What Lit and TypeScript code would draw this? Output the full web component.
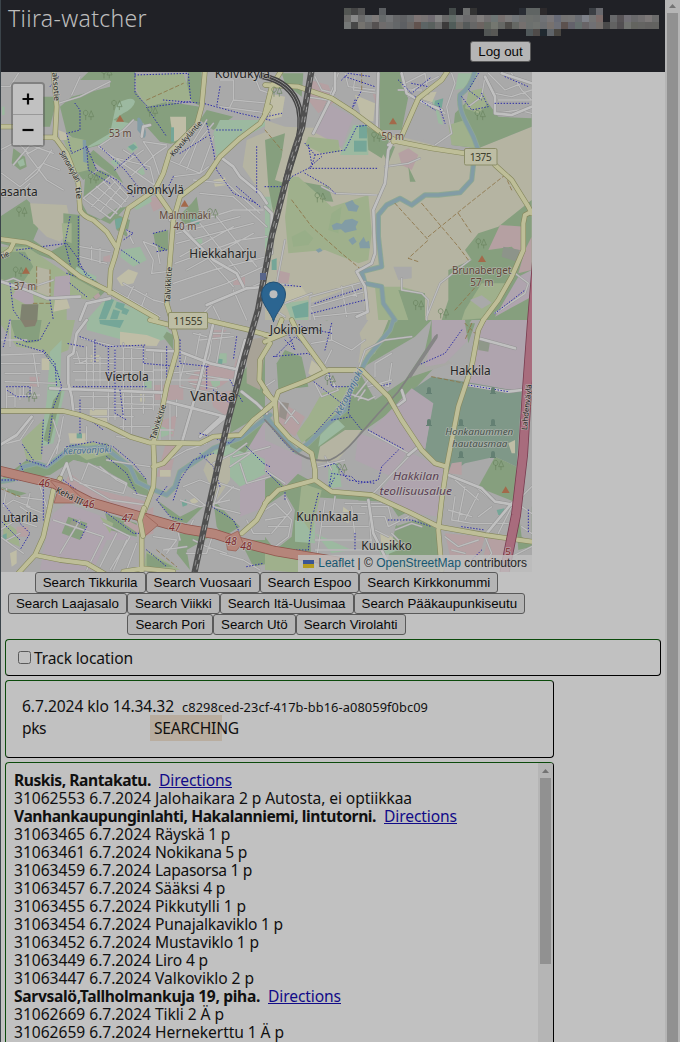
import { LitElement, html, svg, css } from "lit";
import { customElement } from "lit/decorators.js";

type Area = [string, string];
type Label = [string, number, number, number, number, string?, number?];
interface Tile {
  x: number;
  y: number;
  areas: Area[];
  water: string;
  streets: string;
  collectors: string;
  paths: string;
  tracks: string;
  major: string;
  trees: [number, number][];
  peaks: [number, number][];
  labels: Label[];
}

const F = "#869f7e", G = "#9fb08c", P = "#9cb9a0", R = "#b5b4a2", I = "#afa4ae",
  T = "#75a698", C = "#b5a0a2", S = "#bfbda6", W = "#829ca5", K = "#7f9888", B = "#a9a9a9";

const tiles: Tile[] = [
  {
    x: 0, y: 70,
    areas: [
      [F, "M265 6H405V60L440 110L500 95L515 222L480 215L430 160L400 150L300 225L262 235L290 300L250 330L225 300L215 200L200 190L180 110L215 80L330 50V30L240 30Z"],
      [P, "M345 120Q350 95 375 90Q400 80 405 95Q400 115 370 130L340 150L390 160L320 215L270 232L262 230L330 190Z"],
      [G, "M405 15L550 10L575 90L500 95L440 110L410 60Z"], [F, "M565 6H605V110L575 95L560 40Z"],
      [F, "M505 95L600 110L590 150L545 220L510 220L480 170Z"], [S, "M510 140H558V200L520 215Z"], [T, "M513 172H522V215H513Z"],
      [F, "M620 120L700 140L640 180L600 150Z"],
      [P, "M640 190L660 150L790 150L800 165L700 220L650 265Z"], [R, "M740 210L810 180V420L770 350L728 290Z"],
      [F, "M0 440L80 388L130 440L100 510L150 545L200 520L230 590L160 570L90 545L0 520Z"],
      [R, "M90 400L200 405L215 470L180 515L140 500L100 460Z"],
      [F, "M190 430L240 435L240 590L320 660L290 690L210 650L190 520Z"], [G, "M185 460L215 460L215 520L190 510Z"],
      [G, "M0 530L80 530L200 610L300 665L270 690L200 680V750H0Z"], [F, "M0 545L75 545L100 590L60 650L0 625Z"],
      [R, "M110 590L150 600L150 680L110 665Z"], [I, "M60 640H95L102 700L80 705L35 680Z"], [I, "M165 620L210 615V680L160 690Z"],
      ["#7f8270", "M65 703H115L112 750H60Z"], [F, "M130 80H165V110L150 170H130Z"], [P, "M6 110H14V135H6Z"],
      [F, "M40 235L75 260L80 290L60 300L35 280Z"], [P, "M52 275L70 265L75 285L60 290Z"],
      [F, "M255 325L300 300L335 315L250 390Z"], [F, "M246 400L262 430L330 462L380 410L350 415L300 450L250 435Z"],
      [G, "M185 195L255 210L265 300L225 310L210 260Z"], [F, "M280 240L340 290L370 340L300 290L260 260Z"], [P, "M380 235L405 215L415 235L395 250Z"],
      [T, "M384 230L400 222L412 232L398 242Z"], [P, "M410 300L428 290L435 312L420 318Z"], [P, "M330 275L350 265L360 280L345 290Z"],
      [W, "M412 145Q420 135 430 165Q445 190 432 205L412 180Z"], [W, "M248 210H258L262 280L250 275Z"],
      [C, "M445 385L470 380L490 410L460 425Z"], [P, "M425 390L450 370L455 395L410 420L400 410Z"],
      [F, "M340 430L390 450L380 500L350 480Z"], [T, "M345 448L365 442L368 468L348 478Z"], [F, "M460 490L505 480V540L470 545Z"],
      [P, "M365 540L420 530L440 570L400 590L360 560Z"], [S, "M350 625L385 598L414 608L400 640L365 648Z"],
      [F, "M575 400L590 380L600 440L560 470L535 440Z"], [T, "M570 445L600 440V462L575 465Z"], [P, "M585 510L605 505L610 525L595 530Z"],
      [S, "M640 330L675 322L680 345L645 350Z"], [S, "M175 180L200 190V210H180Z"], [P, "M230 590L290 620L280 650L220 610Z"],
      [P, "M260 750L322 680L480 750Z"], [T, "M320 682L342 690L318 748H296Z"], [T, "M350 695L375 702L368 722L345 712Z"], [T, "M340 718L360 724L352 748H330Z"], [T, "M370 712L388 720L380 735L364 730Z"],
      [C, "M700 625L735 620V645H700Z"], [C, "M310 560L330 555V575H310Z"], [C, "M280 680L295 668L302 678L288 690Z"], [S, "M165 690L200 685L210 715L160 725Z"],
    ],
    water: "",
    streets: "M0 50H30L55 10M175 100L240 80L330 35M215 75L240 20M0 240L50 215L85 250L130 225M40 285L90 225L160 250M75 330L130 280L180 300M80 250L140 330L190 360M5 310L60 350L110 310L155 240M10 380L60 370L90 340M295 230L370 180L400 150M295 230L470 350M330 260L450 290L465 350M360 290L430 240M390 320L470 250L500 230M370 240L400 260M430 215L500 225M430 215L460 260L480 320M250 385L330 320L385 380L330 445ZM270 370L350 430M290 350L365 410M310 335L378 395M275 410L345 335M300 425L362 350M505 270L600 310L640 200M540 280L620 150M560 300L590 220L640 160M520 320L600 310L625 290M580 330L680 340L780 430M600 370L700 380L800 470M540 470L700 420L790 420M530 490L720 440M530 520L760 460M540 560L700 470M560 600L760 490M525 580L720 510L800 500M600 460L720 610M650 440L770 590M560 480L620 560L700 650M520 640L640 600L800 560M540 690L680 640L790 590M600 740L640 700L780 640M700 660L740 750M640 710L660 750M380 480L400 520M430 515L460 570L455 610L500 605M430 515L470 530L480 580M240 530L330 545M300 535V580M275 530V570M240 560L320 580M370 640L460 690L500 700M400 650L380 690M440 670L420 720M340 660L480 740M660 30H700V90L810 100M700 90L690 110M660 110L810 130M760 10L780 60L810 70M0 640L40 625L100 650L160 630",
    collectors: "M660 260L700 290L720 320L780 370L800 400M510 450L550 480L640 570L710 610L730 650M330 685L260 700L240 750M5 635L80 660L140 685L240 680M425 200L430 170L450 165M800 650L740 655L620 705",
    paths: "M175 20L150 50M405 10V70L445 112L570 95M405 15L565 10L572 90M440 112L500 200M225 100L240 120L240 180L200 190L215 250L260 230L290 300L350 330L400 380M260 230L265 300L330 340M300 230L375 300L430 370M345 300L400 250L440 300M235 440L235 590M210 440L195 520L215 600M50 540L200 520L230 560L270 640M90 570L60 550M200 610L290 640M240 590L300 650M210 640L260 680M620 160L640 240M640 240L650 300L700 370L770 400M490 90L610 100L720 130L810 150M660 50L650 110M770 230V370M460 490L500 480M460 520L500 540L470 545M380 480L400 490L370 510M350 530L420 580M30 640L40 720L60 750M150 690L160 750M540 250L620 200M520 320L500 360M710 350L780 410M650 180L730 180",
    tracks: "M440 90L550 40M110 590V660M150 600V680M100 700H150",
    major: "M160 0L170 110L165 205M0 170H40M130 202H165L200 250L235 340L240 420Q250 440 280 450L320 485L348 530M615 0L605 110L590 165L510 245L490 310L465 360L385 415L360 500L345 560L332 600L328 668M465 360L510 425M810 110L780 160L720 205L660 260L620 320L540 380L520 450L510 570L500 700L515 750M0 507L80 518L150 550L240 620L330 665L470 745M40 520L30 540L0 560",
    trees: [[265, 135], [350, 105], [457, 125], [65, 425], [320, 10], [280, 325], [55, 605], [638, 430]],
    peaks: [[360, 146], [554, 401], [78, 602]],
    labels: [["Simonkylä", 466, 370, 172, 36], ["asanta", 57, 377, 112, 36], ["Hiekkaharju", 669, 563, 202, 36], ["Koivukylä", 727, 21, 166, 36],
      ["53 m", 361, 200, 68, 30, "#62483a"], ["Malmimäki", 555, 444, 154, 30, "#62483a"], ["40 m", 555, 479, 69, 30, "#62483a"], ["37 m", 75, 657, 67, 30, "#62483a"],
      ["Koivukyläntie", 562, 210, 132, 23, "#222", -49], ["Simonkylän", 205, 292, 104, 23, "#222", 60], ["tie", 230, 370, 36, 23, "#222", 82], ["aksotie", 162, 50, 86, 23, "#222", 86], ["Talvikkitie", 511, 645, 108, 23, "#222", -87], ["tie", 17, 560, 26, 23, "#222", -25]],
  },
  {
    x: 265, y: 70,
    areas: [
      [R, "M0 150L60 170L330 180L600 250L800 170V750H0Z"], [P, "M0 380H20V500L0 540Z"], [B, "M0 60L50 50L120 10H340V160L240 250L180 180L120 160L60 140L0 150Z"],
      [F, "M50 10H115L110 80L60 40Z"], [I, "M180 95L265 140L230 230L145 185Z"], [C, "M135 30L190 45L210 95L160 130L130 90Z"],
      [S, "M270 75L330 100L325 155L290 145Z"], [P, "M265 165H310V255L225 255Z"], [T, "M282 165H306V205H282Z"], [T, "M267 212H305V245H267Z"], [G, "M130 200L220 210L225 245L170 250L120 225Z"],
      [F, "M340 6H500L430 80L410 180H345Z"], [F, "M305 170L375 205L350 265L310 240Z"], [B, "M410 6H545L460 90L450 80L410 50Z"], [P, "M480 70L510 90L540 180L490 170Z"], [T, "M510 92L535 85L530 115L505 118Z"], [S, "M470 70L515 65L500 100L475 100Z"],
      [B, "M440 110L510 110L520 160L550 170L500 225L460 200Z"],
      [F, "M570 130L640 60L700 130L800 130V170L640 235L560 225Z"], [G, "M550 165L600 150L640 235L560 225Z"], [P, "M580 10H640L620 50L570 60Z"], [B, "M640 6H800V145L700 140L640 60Z"],
      [G, "M610 65L650 55L670 100L640 130L600 115Z"],
      [F, "M0 210L60 190L50 260L30 330L60 340L25 430L10 350Z"], [F, "M110 335L190 350L205 395L130 390L100 360Z"],
      [G, "M75 320L100 320L200 410L310 375L320 490L310 570L280 580L180 540L70 550L60 440Z"], ["#98ae88", "M80 500L120 480L145 505L130 525L85 530Z"], ["#98ae88", "M200 430L230 410L220 490L190 480Z"],
      [W, "M240 400L262 390L270 402L282 408L275 425L250 422Z"], [W, "M200 466L215 458L230 462L240 450L262 446L280 455L272 470L275 480L240 488L228 478L205 480Z"], [W, "M250 510L266 500L275 515L262 525ZM282 520L296 500L303 516L312 512L315 535L285 535Z"], [W, "M152 540L165 534L173 542L160 548Z"],
      [F, "M800 390L700 470L640 490L600 540L620 570L550 600L550 690L530 750H800Z"], [C, "M705 465L780 470L775 565L740 530L670 540Z"], ["#8d948a", "M715 530L765 540L755 575L710 560Z"], [I, "M760 620L800 600V680L690 740Z"], [C, "M780 540L800 500V600L760 610Z"],
      [G, "M600 720L650 640L730 640L655 745L590 750Z"], [B, "M615 690L650 676L680 698L650 716Z"],
      [C, "M400 250L430 235L460 255L440 300L410 285Z"], [F, "M430 290L452 335L435 335Z"], [F, "M330 210L390 230L370 280Z"], [B, "M385 590L440 590V625L400 630Z"],
      [G, "M330 650L410 650L480 670V750H340Z"], [F, "M400 660L480 670L480 750H430Z"], [P, "M60 700L130 690V750H80Z"], [T, "M80 710L130 695V740L90 745Z"], [B, "M135 700L290 640L305 750H135Z"], [S, "M45 655L110 650L130 680L60 700Z"], [T, "M20 570L35 565V600H20Z"], [C, "M35 600L75 610L70 640L40 640Z"],
      [S, "M10 70L60 80L50 140L10 150Z"], [C, "M320 60L338 80V120Z"],
    ],
    water: "M630 0Q620 50 585 75Q580 110 600 150L625 200L640 240M625 285L620 330L585 368L520 375L480 375L440 405L405 385L365 405L340 435V500L350 590L290 605L300 640L350 650L355 700L390 750",
    streets: "M120 80L190 90L145 190M220 10L190 90M150 20L170 60L210 70M240 10L250 50L330 60M270 20L265 60L340 70M410 10L430 80L500 100M420 40L480 10L490 70M440 60L520 20M490 100L540 130M400 60L470 60M560 10L570 40L545 110L560 190L510 225M610 110L650 80L660 20M660 20L690 70L740 80L800 60M670 10L720 60L770 40M690 130L760 120L800 130M700 90L800 90M740 10L770 60L800 90M170 350L210 370L335 375M360 290L430 280L465 265M35 640L60 510M60 700L140 670M135 750V680L300 635M140 710L300 665M230 650L245 740M260 645L275 680M410 625V660L470 670L490 690L485 750M485 740L525 640L615 570M140 720L150 750M150 740L300 725M690 730L780 670L790 640L750 610M20 640L80 645M0 700L60 740",
    collectors: "M340 10L335 170M370 225L385 215M385 215L370 240L360 340L325 420L330 550L320 580L275 605L300 650L308 725L275 740M410 10L425 70L470 95L530 120M660 20L690 80L690 130L740 135L800 110M710 10L800 40M210 10V60L145 190M0 410L20 430L20 550",
    paths: "M135 295L340 295M120 220L150 255L240 240L275 170L310 165M150 255L140 290L80 320M120 310L190 350L210 370M240 20L330 50M270 90L260 120L290 60M400 30L440 70L500 20M440 40L490 50M590 80L620 120L670 110L650 70M640 10L610 60L650 90M720 20L790 50M690 100L790 100M135 290L170 260M140 730L300 690M150 700L290 655M5 140L50 130M0 350H60L80 320M520 100L540 160M130 225L140 280M690 730L780 660M230 30L250 10L320 20M450 80L510 120M60 645L110 650",
    tracks: "M390 400L490 510L430 565M490 500L600 410L720 315M470 400L580 530L610 570M580 430L620 490M430 565L460 575M720 315L740 360M570 720L650 630M80 390L140 470L230 550L290 600M0 180L50 240M290 10V60",
    major: "M0 45L100 50L200 85L270 130L350 190L400 215L500 235L600 250M690 285L740 330L790 410L800 430M800 425L780 435L775 460V540L740 620L700 690L655 750M550 0L530 30L460 85L440 130L405 210L385 215M50 0L20 50L0 130",
    trees: [[335, 200], [165, 382], [645, 135], [648, 520], [460, 705], [35, 65], [535, 730]],
    peaks: [[384, 154], [651, 567]],
    labels: [["50 m", 383, 207, 67, 30, "#62483a"], ["Brunaberget", 650, 610, 178, 30, "#62483a"], ["57 m", 651, 645, 70, 30, "#62483a"]],
  },
  {
    x: 0, y: 320,
    areas: [
      [G, "M0 0H225L205 90L180 100L170 130L150 140L130 90L50 80L0 10Z"], [F, "M30 0H125L115 65L80 70L45 50Z"], ["#85806f", "M62 0H112L105 18L75 22Z"],
      [P, "M150 95L185 60L180 200L195 210L160 370L120 380L140 240Z"], [F, "M160 240L185 210L180 240L150 370L130 360Z"], [P, "M260 0H480L520 50L470 65L370 60L260 30Z"], [T, "M298 0H372L360 24L300 12Z"], [S, "M360 35L440 45L480 60L470 78L360 75Z"],
      [G, "M65 360L130 300L125 420L80 420Z"], [F, "M0 480L80 420L150 440L200 380L320 370L440 480L450 540L400 510L300 440L220 420L150 465L60 480Z"],
      [G, "M200 380L280 365L340 400L260 420Z"], [C, "M210 455L280 500L440 545L430 600L250 545L190 500Z"], [B, "M220 420L300 440L380 490L375 530L260 500L200 450Z"], [S, "M270 265H322V310L268 300Z"], [S, "M272 105H300V125H272Z"], [S, "M125 115H148V150H125Z"], [S, "M205 340H260V370H210Z"], [T, "M230 340H246V355H230Z"],
      [C, "M460 195H550V240H465Z"], [C, "M560 180L610 130L700 150L710 110L720 160L660 200L600 220Z"], [C, "M630 30H680L650 60H630Z"], [C, "M630 220L710 210L760 240L680 290L640 260Z"], [C, "M490 300L530 285L520 350L480 340Z"],
      [C, "M88 170H118V200H90Z"], [P, "M430 185L455 180V205H430Z"], [S, "M420 222H435V245H420Z"], [P, "M655 100H680V130H650Z"], [T, "M655 116L668 118L666 136L653 132Z"], [P, "M630 180L660 170V195L640 205Z"],
      [F, "M690 340L700 200L760 110L770 60L810 60V270L740 310Z"], ["#a8a397", "M740 60L800 50L780 210L740 190Z"],
      [P, "M600 400L700 360L810 430V470L720 500L640 420Z"], [R, "M630 400L690 410L690 480L650 540L610 450Z"], [I, "M740 330L810 290V420L780 410L730 360Z"], [I, "M720 500L800 460V560L720 590Z"], [F, "M690 350L790 310L735 400L690 380Z"],
      [P, "M455 320H490L520 340L460 360Z"], [C, "M500 360L530 380L510 470H470Z"], [S, "M480 450H512V470H480Z"],
      [F, "M470 540L540 590L620 550L560 610L520 600Z"], [F, "M640 540L720 620L670 650L650 620Z"], [F, "M540 640L630 650L560 690L570 750L530 700Z"],
      [I, "M160 580L200 550L310 590L410 660L320 660L280 750H120L140 640Z"], [F, "M315 580L410 610L410 650L330 630Z"], [F, "M205 590L262 610L240 660L185 640Z"], ["#979c8a", "M215 600L245 610L235 630L205 622Z"], [G, "M300 590L340 610L330 640Z"],
      [C, "M420 585L460 560L460 640L420 650Z"], [F, "M0 500L80 520L50 530Z"], [G, "M10 600L50 630L60 680L10 660Z"], [T, "M8 645L20 640V658H8Z"], [S, "M570 540L590 530L595 545L575 555Z"], [T, "M545 545L558 538L562 555L548 560Z"], [C, "M50 620H85V650H50Z"],
      [G, "M440 690L540 750H430Z"], [F, "M440 700L520 740L440 745Z"], [F, "M720 660H810V730L760 740Z"], [S, "M30 700L50 690V730L35 740Z"], [C, "M380 600L460 640L430 650L370 610Z"], [F, "M500 35L520 45L520 90L490 50Z"],
    ],
    water: "M0 485L40 478L70 440L110 430L140 440L180 410L215 380L260 385L310 380L350 410L390 440L410 485L450 505L500 525L525 500L540 455L570 435L600 415L640 385L720 355L810 285",
    streets: "M0 105L130 100M0 130H120M15 160H120M15 185L170 190M20 205V265M60 205V240M100 100L115 200M30 0V80M0 60H80M25 230L120 225M45 200V260M70 200V230M95 200V225M245 55L350 80L540 95M230 95L240 130L260 120M225 130H340M220 155H460M225 180H700M260 80V200M280 60V270M300 110V210M325 75V300M345 80V300M370 70V340M395 80V340M430 80V280M460 90V270M485 90V260M220 115H440M240 230H460M225 265H455M240 290H400M340 250L490 255M360 320H450M350 350L450 360M540 90V200L640 220M560 100L540 180M600 40L585 120M640 0L630 100L540 370M670 20L650 130M690 40H630M580 110L700 150M600 60L700 50M560 160L690 180M570 190L650 205M600 180L575 260M580 40L620 50M460 330H520M480 260V360M510 250V360M530 240V290M500 160L610 150M460 150H500M260 320V360M160 300L180 360L140 440M190 290L170 400M100 300L60 360L0 375M0 300V260M245 480L265 430L380 490L370 520M300 440L350 480L380 495M210 470L330 540L440 555M240 490L370 520M320 420L380 430L450 440M400 520L440 530M20 505L10 560L40 540L90 560M50 530L130 540M90 520L80 560L130 580M60 560L120 600M470 440L560 390L620 370M550 500L600 480L650 500M540 540L600 560L690 540M560 510L620 560M580 600L560 640L620 640M640 430L700 400L740 370M700 500L650 550M720 430L740 490L810 470M700 410L810 380M690 440L750 400M720 510L660 490L640 560L720 580M160 600L310 650L260 750M310 610L390 650L330 750M350 640L300 740M380 660L340 750M410 670L380 750M240 600L180 700M140 560L120 500M0 630L50 600L110 620M0 650L70 700M20 660L60 640M580 660L620 680L680 700M640 640L620 700M660 700L730 720L780 750M490 690L560 680M470 600L530 620L540 660M460 650L530 660L500 700M560 700H620M740 600L760 640L810 640",
    collectors: "M260 0L230 40L220 100L205 110L205 190L215 230L220 275M150 205L340 212L490 218M500 245L580 265L675 290M440 90L540 95L630 130L720 150M735 60L710 150L690 280L620 340M640 10L600 180L545 370M665 290L600 350M0 375L50 345L95 290M180 475L200 430L215 480M725 215L770 250L800 280",
    paths: "M45 50L80 65L120 60L150 5M50 70L130 95L170 150L185 200L160 260L145 370M130 90L165 130L170 200M30 0L10 80M240 50L320 80L440 75M285 60V130M250 80L200 70M345 90V280L380 300M360 210L370 290M325 85V180M430 80V130L540 140M500 80V200M540 60V130L630 140M220 200H440M240 240V340M270 300L310 330M200 380L280 365L340 380L400 430L440 480M100 420L65 370M80 420L140 440L190 400M60 430L80 480L0 480M130 300L125 400M320 410L380 460L410 520M520 540L540 480L580 420L640 400M620 140V210M600 340L690 370L740 320L810 270M600 400L640 440L660 500M640 210L690 250M500 500L470 540M20 200H90V230H50L20 210M470 540L510 590L550 600M190 480L270 540L400 640L440 640M130 500V600M10 550L50 600L90 640L60 690M620 550L700 600L720 640M440 690L500 740M0 600L60 660M740 380L790 430L810 440M690 180L730 250M500 10L540 60M220 600L260 620L240 660M740 740L790 730M710 50L700 120",
    tracks: "M0 505L60 530M470 690L530 740",
    major: "M0 273H190L240 285L320 315L390 350L450 368L600 370L640 350L720 345L760 300L810 260M515 0L530 60L530 95L500 200L480 300L460 368L463 440L460 500L430 580L425 640L425 765M460 440L490 430L540 375L545 370M450 0L530 20L620 0L740 28L810 48M810 70L780 120L778 180L810 230M805 535L770 600L725 640M180 475L160 510L150 560L130 650L105 705L50 765M105 705L180 720L260 730L320 765M370 755L430 745L520 755",
    trees: [[95, 230]],
    peaks: [],
    labels: [["Viertola", 381, 182, 130, 36], ["Vantaa", 639, 242, 136, 42], ["utarila", 62, 605, 106, 36], ["Keravanjoki", 262, 398, 146, 27, "#486f96", -3], ["Talvikkitie", 480, 307, 108, 23, "#222", -72], ["Kehä III", 205, 534, 86, 25, "#222", 27],
      ["46", 133, 499, 34, 30, "#812b2e"], ["46", 266, 562, 34, 30, "#812b2e"], ["47", 382, 605, 34, 30, "#812b2e"], ["47", 524, 632, 34, 30, "#812b2e"], ["48", 693, 674, 34, 30, "#812b2e"], ["48", 738, 689, 34, 30, "#812b2e"]],
  },
  {
    x: 265, y: 320,
    areas: [
      [F, "M180 0H620L520 130L400 260L300 330L140 430L120 360L200 300L280 160L350 40Z"], [R, "M270 0H370L330 100L280 130L290 60Z"], [B, "M190 0H310L270 60L280 140L200 150L100 50Z"], [B, "M280 150L450 50L500 0L480 90L420 180L330 240Z"], ["#a8a8a4", "M500 80L560 130L440 170L460 130Z"],
      [F, "M60 90L110 110L130 200L40 210L35 130Z"], [S, "M140 120L175 150L150 175L130 160Z"], [G, "M170 220L270 190L230 270L110 370L95 340L130 290Z"], [C, "M40 240L120 290L90 350L35 310Z"], ["#96908a", "M45 245L72 250L62 300L42 290Z"],
      [P, "M170 320L210 290L240 320L160 380Z"], [R, "M240 330L290 330L220 420L155 430L165 380Z"],
      [I, "M500 0H600L610 60L540 130L480 140L500 60Z"], [I, "M650 0H804L770 215L610 195L630 60Z"], ["#8f9889", "M640 60L675 65L670 95L640 90Z"], [F, "M600 10H630L610 70Z"],
      [K, "M500 170L570 180L770 215L755 440L690 410L600 430L560 460L510 430L480 390L500 260L440 210Z"],
      [I, "M440 205L505 250L480 390L430 400L310 340Z"], [I, "M280 340L430 390L380 470L270 420Z"], [I, "M440 400L545 450L525 590L440 580L340 520Z"], [F, "M0 480L60 440L150 490L210 520L340 530L440 580L520 630L530 750H280L280 540L130 530L140 750H0Z"],
      [F, "M690 410L755 440L750 550L680 540L640 500Z"], [C, "M560 430L590 425L590 465L550 460Z"], [S, "M730 370L750 360V400H740Z"],
      [P, "M190 430H220L230 500L190 505Z"], [B, "M240 540L370 545L400 590L360 750H130L180 540Z"], [P, "M90 600L150 610L150 670L90 665Z"], [G, "M110 490L170 510L140 640L100 580Z"], [P, "M150 640L260 690L200 700Z"], [B, "M0 560L60 520L90 570L80 650L30 690L0 650Z"],
      [S, "M235 560L260 580L250 610L230 600Z"], [S, "M345 635L380 650L400 670L350 680Z"], [P, "M330 660L400 690L350 710Z"],
      [B, "M560 470L760 550L730 640L530 610Z"], [C, "M540 640L660 650L640 720L560 730Z"], [C, "M670 650L740 655L720 720L650 730Z"], [I, "M0 360L110 410V450L60 500L0 440Z"], [T, "M695 570L718 565V585H700Z"], [F, "M750 560H800V680L760 690Z"], [B, "M760 570L800 540V670L770 650Z"], [G, "M0 690L120 700V760L0 750Z"], [B, "M380 600L440 570L470 620L430 650Z"], [F, "M390 620L450 600L500 640V700L420 690Z"],
    ],
    water: "M0 285L50 350L95 395L130 370L190 310L240 270L260 200L310 110L350 60L375 30L385 0",
    streets: "M140 70L200 60L200 20M200 60L260 90L300 60M200 90L180 130M40 240L100 310M60 310L90 270M280 150L300 90L360 60L440 50M300 210L280 240M310 200L380 180M250 220L310 240L330 230M340 190L370 200L380 130M380 100L330 130L330 170M150 190L170 230L220 210L200 180M270 230L310 180M0 200L30 180M0 450L60 490M180 410L200 450M160 440L240 420M325 520L440 400L460 380M310 335L430 400M550 470L620 490L680 540L740 555M600 500L580 600M550 570L620 590M640 520L600 600M560 600L620 610L730 610M570 530L560 600M640 590L680 560M240 550H350M310 540L320 690M150 750L180 540M180 580H300M170 620H310M150 660L320 660M150 690H340M210 530L200 600M320 560H370L380 600M320 590H360L370 620L430 590M330 630L370 650M0 570L30 550L60 580L80 600L70 650L30 680M0 600L60 590M60 530L80 570L20 640M10 620H70M390 630L440 610L470 620M380 640L420 680M540 650L580 680L640 660M560 690L600 700M660 650L680 700L650 740M700 640L740 560L800 500M770 560L800 580M770 620L800 640M740 710L800 680M570 480L640 540M260 560L270 650M290 560L310 560",
    collectors: "M640 55L750 85M610 195L730 215L770 210M430 405L460 380M410 210L420 240L400 255M550 465L650 505L690 545L750 555M310 540L325 640L380 750M180 150L210 200M665 640L740 550",
    paths: "M30 110L90 50L140 90M110 20L200 40M170 130L130 100L20 110M140 180L230 250L150 340M190 150L200 200L260 200L250 280L290 330M200 300L260 290M590 30L540 100L450 140M610 195L730 215M400 390L350 440L340 480L280 490L260 470L200 460L190 510L210 470M180 440L210 430L250 480L330 490M160 520L140 600L130 690L0 690M60 500V540M50 500L0 450M0 300L60 370L90 400M270 640L270 690M370 600H440L500 620M310 330L420 390M590 620L660 630M650 690L620 720M790 570V640M300 150L340 200L380 190M60 60L90 90L70 40M200 10L180 90",
    tracks: "M500 170L600 190M620 10L600 60M600 10L640 50",
    major: "M80 0L100 40L180 150M0 215L30 245L40 215L130 180L190 150L290 150L370 230L410 300L470 390L510 430L545 440M0 270L30 245L35 310L75 355L140 400L150 450V480L200 515L320 525L440 580L520 620L660 645L800 665M0 550L40 510L150 480M655 0L640 30L620 140L580 260L545 440L530 540L520 630L530 750M0 45L30 50L50 0M0 65L60 40",
    trees: [[230, 445], [700, 435], [195, 180]],
    peaks: [[722, 510]],
    labels: [["Jokiniemi", 93, 39, 157, 36], ["Hakkila", 616, 164, 122, 36], ["Honkanummen", 643, 344, 204, 28, "#47534c"], ["hautausmaa", 644, 380, 166, 28, "#47534c"], ["Hakkilan", 453, 479, 138, 33, "#5b3f55"], ["teollisuusalue", 452, 522, 217, 33, "#5b3f55"], ["Kuninkaala", 187, 601, 186, 36], ["Kuusikko", 365, 689, 152, 36], ["Keravanjoki", 258, 219, 152, 27, "#486f96", -63], ["Lahdenväylä", 791, 262, 138, 23, "#222", -84], ["5", 729, 704, 17, 28, "#812b2e"]],
  },
];

const place = (t: Tile) => `translate(${t.x} ${t.y}) scale(.33333)`;

@customElement("area-map")
export class AreaMap extends LitElement {
  static styles = css`
    :host { display: block; position: relative; width: 531px; height: 500px; overflow: hidden; }
    svg { display: block; }
    path { fill: none; stroke-linejoin: round; stroke-linecap: round; }
    .area { stroke: none; }
    .label { font-family: "Noto Sans", sans-serif; text-anchor: middle; paint-order: stroke; stroke: #bcbcb8; stroke-opacity: .65; stroke-width: 5px; stroke-linejoin: round; }
    .italic { font-style: italic; }
    .zoom { position: absolute; left: 10px; top: 10px; width: 30px; border: 2px solid rgba(75,75,75,.42); border-radius: 4px; background-clip: padding-box; }
    .zoom button { display: block; width: 30px; height: 30px; padding: 0; border: 0; background: #c1c1c1; color: #050505; }
    .zoom button:first-child { height: 31px; border-bottom: 1px solid #999; border-radius: 2px 2px 0 0; }
    .zoom svg { margin: auto; }
    .credit { position: absolute; right: 0; bottom: 0; height: 17px; width: 234px; box-sizing: border-box; background: rgba(193,193,193,.8); padding: 0 5px; display: flex; align-items: center; font: 12px/17px "Liberation Sans", Arial, sans-serif; color: #252525; white-space: pre; }
    .credit a { color: #175872; }
    .credit svg { margin-right: 4px; }
  `;

  private layer(key: "streets" | "collectors" | "paths" | "tracks" | "major" | "water", color: string, width: number, dash = "") {
    return tiles.map((t) => svg`<path transform=${place(t)} d=${t[key]} stroke=${color} stroke-width=${width} stroke-dasharray=${dash || "none"}></path>`);
  }

  render() {
    const rail = "M312 68Q307 95 302 128Q294 150 290 165L272 235L258 310L245 355L227 425L208 510L194 575";
    const railArc = "M262 76Q292 82 299 108Q303 128 296 148L286 180";
    const motorway = "M-4 470L55 484L90 502L142 517L185 529L215 534L240 542L275 551L340 562";
    const trunk = "M538 250L532 322L527 390L523 455L516 515L504 575";
    return html`
      <svg width="531" height="500" viewBox="1 72 531 500">
        <rect x="1" y="72" width="531" height="500" fill=${B}></rect>
        ${tiles.map((t) => svg`<svg x=${t.x} y=${t.y} width=${t.x ? 268 : 265} height="252" viewBox=${t.x ? "0 0 804 756" : "0 0 795 756"}>
          ${t.areas.map(([c, d]) => svg`<path class="area" d=${d} style=${`fill:${c}`}></path>`)}</svg>`)}
        ${this.layer("water", "#8fa893", 16)}
        ${this.layer("water", W, 11)}
        ${this.layer("streets", "#999", 6.5)}
        ${this.layer("streets", "#bdbdbd", 4)}
        ${this.layer("tracks", "#8d7447", 2.5, "11 8")}
        ${this.layer("collectors", "#929292", 11)}
        ${this.layer("collectors", "#c0c0c0", 8)}
        ${this.layer("paths", "#2c2ca8", 3, "2 7")}
        <path d="M437 335L424 355L412 372L398 392L377 415L355 440Q342 455 330 460Q308 463 292 449L265 420" stroke="#808080" stroke-width="1.8"></path>
        <path d="M436 337L410 376" stroke="#858585" stroke-width="3.5"></path>
        ${this.layer("major", "#85875d", 16)}
        ${this.layer("major", "#bebe98", 12.5)}
        <path d=${motorway} stroke="#8e554c" stroke-width="10"></path>
        <path d=${motorway} stroke="#b5857a" stroke-width="8.4"></path>
        <path d="M50 480L68 485L86 502L72 503L54 503L58 490ZM142 512L158 525L145 536L138 522ZM226 537L238 531L243 543L236 551L228 550Z" style="fill:#b5857a" stroke="#9b6257" stroke-width=".8"></path>
        <path d="M143 536L140 520L144 508" stroke="#85875d" stroke-width="5.4"></path>
        <path d="M143 536L140 520L144 508" stroke="#bebe98" stroke-width="4.2"></path>
        <path d=${trunk} stroke="#783d50" stroke-width="10"></path>
        <path d=${trunk} stroke="#a86c7d" stroke-width="8.4"></path>
        <path d=${railArc} stroke="#444" stroke-width="6"></path>
        <path d=${railArc} stroke="#aaa" stroke-width="3.2"></path>
        <path d=${railArc} stroke="#444" stroke-width="2"></path>
        <path d=${rail} stroke="#505050" stroke-width="6.2" style="stroke-linecap:butt"></path>
        <path d=${rail} stroke="#aaa" stroke-width="1" stroke-dasharray="5 5" transform="translate(1.5 0)"></path>
        <path d=${rail} stroke="#999" stroke-width=".8" stroke-dasharray="5 7" transform="translate(-1.5 2)"></path>
        <rect x="260" y="273" width="6" height="7" fill="#58658a"></rect>
        ${tiles.map((t) => svg`<g transform=${place(t)}>
          ${t.trees.map(([x, y]) => svg`<path d=${`M${x - 8} ${y + 14}V${y + 2}m0 0a7 8 0 1 1 .1 0M${x + 8} ${y + 14}V${y + 6}M${x + 8} ${y - 12}l-7 17h14z`} stroke="#69835f" stroke-width="2"></path>`)}
          ${t.peaks.map(([x, y]) => svg`<path class="area" d=${`M${x} ${y - 11}l12 20h-24z`} style="fill:#a3694a"></path>`)}
          ${t.labels.map(([s, x, y, w, size, color = "#252525", turn = 0]) => svg`<text class="label ${/Honka|hauta|Hakkilan|teoll|Kerav|^4\d$/.test(s) ? "italic" : ""}" x=${x} y=${y + 2} font-size=${size} textLength=${w} lengthAdjust="spacingAndGlyphs" fill=${color} transform=${`rotate(${turn} ${x} ${y})`}>${s}</text>`)}
        </g>`)}
        ${[[429, 394], [493, 394], [461, 426], [493, 426], [429, 426], [461, 458], [493, 458]].map(([x, y]) => svg`<path class="area" d=${`M${x - 3} ${y}h6v-1h-1v-4a2 2 0 0 0-4 0v4h-1z`} style="fill:#648073"></path>`)}
        <rect x="464.5" y="148.500" width="32.500" height="16.500" rx="1.500" fill="#bdbda4" stroke="#8b8d68"></rect>
        <text class="label" x="480.700" y="161" font-size="10.500" textLength="22" fill="#42422f" style="stroke:none">1375</text>
        <rect x="168.500" y="312.500" width="39" height="16.500" rx="1.500" fill="#bdbda4" stroke="#8b8d68"></rect>
        <text class="label" x="188" y="325" font-size="10.500" textLength="29" fill="#42422f" style="stroke:none">11555</text>
        <path d="M273.500 321.500C271 312 261.500 305 261.500 294A12 12 0 0 1 285.500 294C285.500 305 276 312 273.500 321.500Z" style="fill:#2b6591" stroke="#234f73"></path>
        <circle cx="273.500" cy="294.300" r="4" fill="#bdbdbd"></circle>
      </svg>
      <div class="zoom">
        <button aria-label="Zoom in"><svg width="14" height="14" viewBox="0 0 14 14"><path d="M7 1.500V12.500M1.500 7H12.500" stroke="#080808" stroke-width="2.200" style="stroke-linecap:butt"></path></svg></button>
        <button aria-label="Zoom out"><svg width="14" height="14" viewBox="0 0 14 14"><path d="M1.500 7H12.500" stroke="#080808" stroke-width="2.200" style="stroke-linecap:butt"></path></svg></button>
      </div>
      <div class="credit"><svg width="12" height="8"><rect width="12" height="4" fill="#3a5596"></rect><rect y="4" width="12" height="4" fill="#b49b1f"></rect></svg><a>Leaflet</a> | © <a>OpenStreetMap</a> contributors</div>`;
  }
}

const searches = [
  ["Tikkurila", "Vuosaari", "Espoo", "Kirkkonummi"],
  ["Laajasalo", "Viikki", "Itä-Uusimaa", "Pääkaupunkiseutu"],
  ["Pori", "Utö", "Virolahti"],
];

const places: { name: string; w: number; sightings: [string, string, number][] }[] = [
  { name: "Ruskis, Rantakatu.", w: 137, sightings: [["31062553", "Jalohaikara 2 p Autosta, ei optiikkaa", 257]] },
  {
    name: "Vanhankaupunginlahti, Hakalanniemi, lintutorni.", w: 362, sightings: [
      ["31063465", "Räyskä 1 p", 75], ["31063461", "Nokikana 5 p", 92], ["31063459", "Lapasorsa 1 p", 97], ["31063457", "Sääksi 4 p", 70],
      ["31063455", "Pikkutylli 1 p", 91], ["31063454", "Punajalkaviklo 1 p", 128], ["31063452", "Mustaviklo 1 p", 104], ["31063449", "Liro 4 p", 53], ["31063447", "Valkoviklo 2 p", 99]],
  },
  { name: "Sarvsalö,Tallholmankuja 19, piha.", w: 246, sightings: [["31062669", "Tikli 2 Ä p", 69], ["31062659", "Hernekerttu 1 Ä p", 129]] },
];

const mosaic = [
  "535653 454545 575757 - - 5c5f62 - - - - - - - - - 444b4a - 6e7070 333333 - - - - - - 292d34 5f6463 5f6463 2d2a2c - - - - - - 3b3f44 68696e - - - - - - - -",
  "6b6b69 898989 6a6a6a 75787a 7e7a79 666a6b 737577 656668 606164 6a6c6e 7e7575 787474 706c72 848484 696969 626d69 747576 6a6a6c 706e6e 817e7d 727071 6e7675 77706f 7b7a7a 727679 6f7070 6d706d 6b6e6d 707276 7a7779 686b77 747373 757575 6a6d73 7e8189 747474 7c6c6a - 68696b 575356 727076 69696b 716f70 7c7878 6c6c6c",
  "757877 474747 75736f 686868 555151 6f6c6c 6c6d6e 646769 5d5f63 6a6766 62534f 5c6465 59605e 6b6b6b 3c3b3b 505c59 6b6864 555a5a 666666 6c6461 636861 747770 666865 4e4c49 656864 75706e 6c706e 707370 6c6e71 77716e 6d6f77 5c514e 63626b 656f6e 686467 707074 756f6c 4a4a4a 626262 524f52 717370 63645f 646462 626160 626260",
  "- - - - - - - - - - - - - - - - - - - - 525655 585855 - - - - 50585a 4f4b49 202930 5f6469 494641 - - - - - - - - - - - - - -",
].map((r) => r.split(" "));

@customElement("app-root")
export class AppRoot extends LitElement {
  static styles = css`
    :host { display: grid; grid-template-columns: 664px 15px; box-sizing: border-box; border-left: 1px solid #3b444a; width: 680px; height: 1042px; overflow: hidden; background: #c1c1c1; color: #101010; font: 15.600px/18px "Noto Sans", sans-serif; }
    .page { height: 1042px; overflow: hidden; }
    header { height: 72px; background: #202126; display: flex; justify-content: space-between; }
    .title { margin: 2px 0 0 7px; font-size: 23px; font-weight: 300; line-height: 32px; color: #bdbdbd; }
    .account { width: 321px; padding-top: 8px; }
    .account svg { display: block; }
    .account button { margin: 5px 0 0 126px; width: 61px; }
    button.action { display: block; box-sizing: border-box; height: 21px; padding: 0 7px; border: 1px solid #5a5a5a; border-radius: 3px; background: #b5b5b5; font: 13.333px/18px "Liberation Sans", Arial, sans-serif; color: #080808; white-space: nowrap; }
    .searches { width: 531px; margin-bottom: 4px; }
    .row { display: flex; justify-content: center; }
    .box { box-sizing: border-box; border: 1px solid #000; border-top-color: #0b4a0b; border-left-color: #0b4a0b; border-radius: 4px; margin-left: 4px; }
    .track { width: 656px; height: 37px; display: flex; align-items: center; padding-left: 12px; margin-bottom: 4px; }
    .check { box-sizing: border-box; width: 13px; height: 13px; border: 1px solid #5a5a5a; border-radius: 2.500px; margin-right: 3px; }
    .job { width: 549px; height: 78px; padding: 12px 16px; margin-bottom: 4px; }
    .line { display: flex; height: 22px; line-height: 26px; }
    .small { font-size: 12.800px; margin: 1px 0 0 8px; }
    .name { width: 128px; }
    .status { box-sizing: border-box; width: 72px; height: 26px; padding-left: 4px; background: #b9ad9f; }
    .results { width: 549px; height: 330px; display: flex; justify-content: space-between; overflow: hidden; }
    .list { padding: 8px; }
    .entry { display: flex; height: 18px; }
    .place { font-weight: 700; margin-right: 8px; }
    .fit { display: block; white-space: pre; }
    .link { color: #110b88; text-decoration: underline; }
    .bar { width: 15px; background: #b5b5b5; display: flex; flex-direction: column; align-items: center; }
    .bar svg { display: block; flex: none; }
    .thumb { width: 11px; background: #919191; height: 186px; }
    .tall { height: 1030px; }
  `;

  firstUpdated() {
    this.renderRoot.querySelectorAll<HTMLElement>("[data-w]").forEach((el) => {
      const range = document.createRange();
      range.selectNodeContents(el);
      const natural = range.getBoundingClientRect().width;
      const n = (el.textContent || "").length;
      el.style.letterSpacing = `${(Number(el.dataset.w) - natural) / n}px`;
    });
  }

  private fit(text: string, w: number, cls = "") {
    return html`<span class="fit ${cls}" data-w=${w}>${text}</span>`;
  }

  private arrow(h: number) {
    return html`<svg width="15" height=${h} viewBox=${`0 0 15 ${h}`}><path d=${`M4 ${h - 5}L7.500 ${h - 9}L11 ${h - 5}Z`} fill="#737373"></path></svg>`;
  }

  render() {
    return html`
      <div class="page">
        <header>
          ${this.fit("Tiira-watcher", 139, "title")}
          <div class="account">
            <svg width="315" height="28" shape-rendering="crispEdges">${mosaic.map((r, y) => r.map((c, x) => c === "-" ? "" : svg`<rect x=${x * 7} y=${y * 7} width="7" height="7" fill=${"#" + c}></rect>`))}</svg>
            <button class="action">Log out</button>
          </div>
        </header>
        <area-map></area-map>
        <div class="searches">${searches.map((r) => html`<div class="row">${r.map((s) => html`<button class="action">Search ${s}</button>`)}</div>`)}</div>
        <div class="box track"><span class="check"></span>${this.fit("Track location", 99)}</div>
        <div class="box job">
          <div class="line">${this.fit("6.7.2024 klo 14.34.32", 152)}${this.fit("c8298ced-23cf-417b-bb16-a08059f0bc09", 246, "small")}</div>
          <div class="line"><div class="name">${this.fit("pks", 24)}</div><div class="status">${this.fit("SEARCHING", 85)}</div></div>
        </div>
        <div class="box results">
          <div class="list">${places.map((p) => html`
            <div class="entry">${this.fit(p.name, p.w, "place")}${this.fit("Directions", 73, "link")}</div>
            ${p.sightings.map(([id, what, w]) => html`<div class="entry">${this.fit(`${id} 6.7.2024 `, 141)}${this.fit(what, w)}</div>`)}`)}
          </div>
          <div class="bar">${this.arrow(15)}<div class="thumb"></div></div>
        </div>
      </div>
      <div class="bar">${this.arrow(13)}<div class="thumb tall"></div></div>`;
  }
}
